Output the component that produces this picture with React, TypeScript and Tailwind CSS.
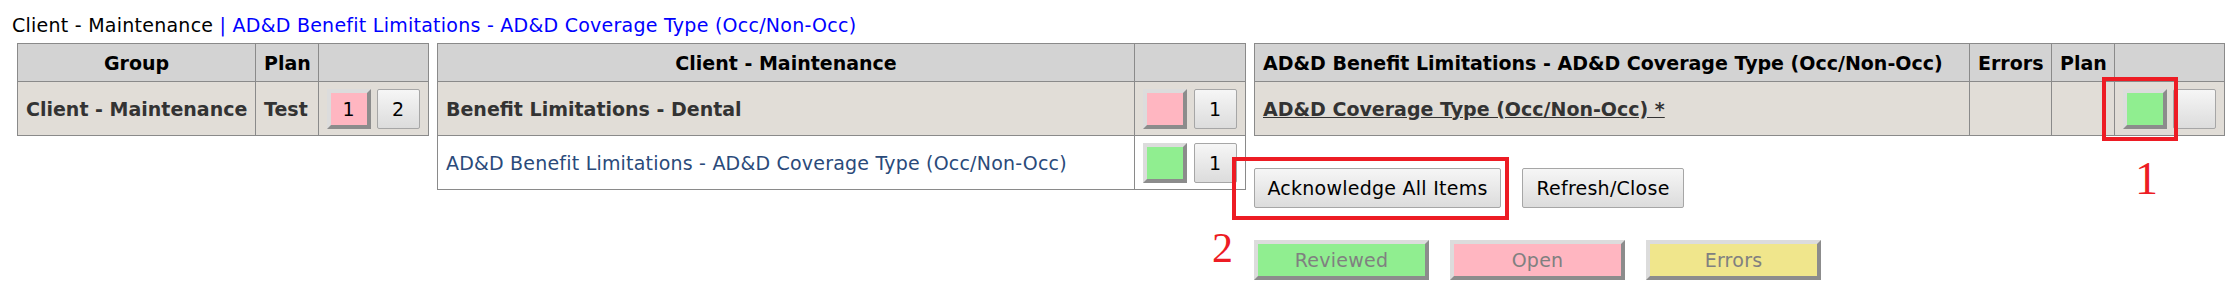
import React from 'react';

const GrayButton: React.FC<{ label?: string; className?: string }> = ({ label = '', className = 'w-[44px]' }) => (
  <button
    type="button"
    className={`h-[40px] ${className} rounded-[2px] border border-[#a6a6a6] bg-linear-to-b from-[#f6f6f6] to-[#dcdcdc] text-[19px] tracking-[0.25px] text-black`}
  >
    {label}
  </button>
);

// outset coloured square used for status + legend
const StatusBox: React.FC<{ bg: string; label?: string; className?: string }> = ({ bg, label, className = 'w-[44px]' }) => (
  <span
    className={`flex h-[40px] ${className} items-center justify-center border-4 border-t-[#dcdcdc] border-l-[#dcdcdc] border-r-[#8c8c8c] border-b-[#8c8c8c] ${bg} text-[19px] tracking-[0.25px] text-[#808080]`}
  >
    {label}
  </span>
);

const th = 'h-[38px] border border-[#8a8a8a] bg-[#d3d3d3] px-2 font-bold text-black';
const td = 'h-[54px] border border-[#8a8a8a] px-2 align-middle';

export default function App() {
  return (
    <div className="relative h-[308px] w-[2235px] bg-white pl-[12px] pt-[14px] font-['DejaVu_Sans',Verdana,sans-serif] text-[19px] leading-[22px] text-black">
      {/* breadcrumb */}
      <div className="tracking-[0.25px]">
        <span>Client - Maintenance </span>
        <span className="text-[#0000ff]">| AD&amp;D Benefit Limitations - AD&amp;D Coverage Type (Occ/Non-Occ)</span>
      </div>

      <div className="ml-[5px] mt-[7px] flex items-start gap-2">
        {/* Group / Plan */}
        <table className="w-[411px] table-fixed border-collapse">
          <colgroup>
            <col className="w-[238px]" />
            <col className="w-[63px]" />
            <col className="w-[110px]" />
          </colgroup>
          <thead>
            <tr>
              <th className={th}>Group</th>
              <th className={th}>Plan</th>
              <th className={th}></th>
            </tr>
          </thead>
          <tbody>
            <tr className="bg-[#e1ddd7]">
              <td className={`${td} whitespace-nowrap font-bold text-[#333333]`}>Client - Maintenance</td>
              <td className={`${td} font-bold text-[#333333]`}>Test</td>
              <td className={td}>
                <div className="flex gap-[6px]">
                  <StatusBox bg="bg-[#ffb6c1]" label="1" className="w-[44px] !text-black" />
                  <GrayButton label="2" />
                </div>
              </td>
            </tr>
          </tbody>
        </table>

        {/* Client - Maintenance */}
        <table className="w-[808px] table-fixed border-collapse">
          <colgroup>
            <col className="w-[697px]" />
            <col className="w-[111px]" />
          </colgroup>
          <thead>
            <tr>
              <th className={th}>Client - Maintenance</th>
              <th className={th}></th>
            </tr>
          </thead>
          <tbody>
            <tr className="bg-[#e1ddd7]">
              <td className={`${td} font-bold text-[#333333]`}>Benefit Limitations - Dental</td>
              <td className={td}>
                <div className="flex gap-[7px]">
                  <StatusBox bg="bg-[#ffb6c1]" />
                  <GrayButton label="1" />
                </div>
              </td>
            </tr>
            <tr className="bg-white">
              <td className={`${td} tracking-[0.2px] text-[#2a4a7a]`}>AD&amp;D Benefit Limitations - AD&amp;D Coverage Type (Occ/Non-Occ)</td>
              <td className={td}>
                <div className="flex gap-[7px]">
                  <StatusBox bg="bg-[#90ee90]" />
                  <GrayButton label="1" />
                </div>
              </td>
            </tr>
          </tbody>
        </table>

        {/* detail + actions */}
        <div className="flex flex-col">
          <table className="w-[970px] table-fixed border-collapse">
            <colgroup>
              <col className="w-[715px]" />
              <col className="w-[82px]" />
              <col className="w-[63px]" />
              <col className="w-[110px]" />
            </colgroup>
            <thead>
              <tr>
                <th className={`${th} whitespace-nowrap text-left`}>AD&amp;D Benefit Limitations - AD&amp;D Coverage Type (Occ/Non-Occ)</th>
                <th className={th}>Errors</th>
                <th className={th}>Plan</th>
                <th className={th}></th>
              </tr>
            </thead>
            <tbody>
              <tr className="bg-[#e1ddd7]">
                <td className={`${td} font-bold text-[#333333] underline`}>AD&amp;D Coverage Type (Occ/Non-Occ) *</td>
                <td className={td}></td>
                <td className={td}></td>
                <td className={td}>
                  <div className="flex gap-[6px]">
                    <StatusBox bg="bg-[#90ee90]" />
                    <GrayButton />
                  </div>
                </td>
              </tr>
            </tbody>
          </table>

          <div className="mt-[32px] flex gap-[21px]">
            <GrayButton label="Acknowledge All Items" className="w-[247px]" />
            <GrayButton label="Refresh/Close" className="w-[162px]" />
          </div>

          <div className="mt-[32px] flex gap-[21px]">
            <StatusBox bg="bg-[#90ee90]" label="Reviewed" className="w-[175px]" />
            <StatusBox bg="bg-[#ffb6c1]" label="Open" className="w-[175px]" />
            <StatusBox bg="bg-[#f0e68c]" label="Errors" className="w-[175px]" />
          </div>
        </div>
      </div>

      {/* red annotations */}
      <div className="absolute left-[2102px] top-[77px] h-[64px] w-[76px] border-4 border-[#ed1c24]" />
      <div className="absolute left-[2135px] top-[156px] font-['Liberation_Serif',serif] text-[46px] leading-none text-[#ed1c24]">1</div>
      <div className="absolute left-[1232px] top-[157px] h-[63px] w-[277px] border-4 border-[#ed1c24]" />
      <div className="absolute left-[1212px] top-[227px] font-['Liberation_Serif',serif] text-[42px] leading-none text-[#ed1c24]">2</div>
    </div>
  );
}
